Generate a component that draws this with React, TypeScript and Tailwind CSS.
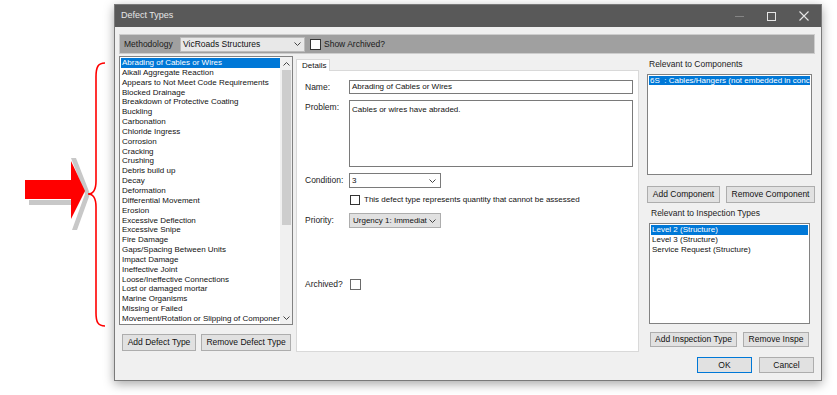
import React from "react";

const defects = [
  "Abrading of Cables or Wires",
  "Alkali Aggregate Reaction",
  "Appears to Not Meet Code Requirements",
  "Blocked Drainage",
  "Breakdown of Protective Coating",
  "Buckling",
  "Carbonation",
  "Chloride Ingress",
  "Corrosion",
  "Cracking",
  "Crushing",
  "Debris build up",
  "Decay",
  "Deformation",
  "Differential Movement",
  "Erosion",
  "Excessive Deflection",
  "Excessive Snipe",
  "Fire Damage",
  "Gaps/Spacing Between Units",
  "Impact Damage",
  "Ineffective Joint",
  "Loose/Ineffective Connections",
  "Lost or damaged mortar",
  "Marine Organisms",
  "Missing or Failed",
  "Movement/Rotation or Slipping of Componer",
];

const inspectionTypes = ["Level 2 (Structure)", "Level 3 (Structure)", "Service Request (Structure)"];

function Chevron({ up = false }: { up?: boolean }) {
  return (
    <svg width="7" height="4" viewBox="0 0 7 4" className="shrink-0">
      <path d={up ? "M0.5 3.5 L3.5 0.5 L6.5 3.5" : "M0.5 0.5 L3.5 3.5 L6.5 0.5"} fill="none" stroke="#444" strokeWidth="1" />
    </svg>
  );
}

function Btn({ label, w, h = "h-[17px]", primary = false }: { label: string; w: string; h?: string; primary?: boolean }) {
  return (
    <div
      className={`${w} ${h} flex items-center justify-center bg-[#e1e1e1] border ${
        primary ? "border-[#0078d7]" : "border-[#adadad]"
      } text-[8.5px] text-[#111] whitespace-nowrap overflow-hidden`}
    >
      {label}
    </div>
  );
}

function Annotation() {
  return (
    <svg width="114" height="395" viewBox="0 0 114 395" className="shrink-0">
      {/* shadow */}
      <rect x="29" y="200" width="42" height="5" fill="#c8c8c8" />
      <polygon points="71,158 76,158 90,194 77,230 72,230 85,194" fill="#c8c8c8" />
      {/* arrow */}
      <rect x="25" y="180" width="48" height="19" fill="#ff0000" />
      <polygon points="71,161 85,191 71,219" fill="#ff0000" />
      {/* brace */}
      <path
        d="M105 63 C98 63 96 67 96 77 L96 181 C96 190 93 194 88 194 C93 194 96 198 96 207 L96 313 C96 322 98 326 105 326"
        fill="none"
        stroke="#ff0000"
        strokeWidth="1.6"
      />
    </svg>
  );
}

export default function App() {
  return (
    <div
      className="w-[837px] h-[395px] bg-white flex overflow-hidden text-[8px] text-[#111]"
      style={{ fontFamily: '"Liberation Sans", Arial, sans-serif' }}
    >
      <Annotation />

      <div className="mt-[4px] w-[708px] h-[377px] flex flex-col border border-[#7a7a7a] bg-[#f0f0f0] shadow-[0_3px_10px_rgba(0,0,0,0.35)]">
        {/* title bar */}
        <div className="h-[22px] bg-[#595959] flex items-center pl-[6px]">
          <span className="text-[9px] text-[#e6e6e6] flex-1">Defect Types</span>
          <div className="flex items-center h-full">
            <div className="w-[32px] flex justify-center">
              <div className="w-[9px] h-px bg-[#858585]" />
            </div>
            <div className="w-[32px] flex justify-center">
              <div className="w-[9px] h-[9px] border border-[#e6e6e6]" />
            </div>
            <div className="w-[34px] flex justify-center">
              <svg width="10" height="10" viewBox="0 0 10 10">
                <path d="M0.5 0.5 L9.5 9.5 M9.5 0.5 L0.5 9.5" stroke="#e6e6e6" strokeWidth="1.1" />
              </svg>
            </div>
          </div>
        </div>

        {/* methodology bar */}
        <div className="mt-[7px] ml-[4px] mr-[6px] h-[20px] bg-[#a0a0a0] border border-[#cdcdcd] flex items-center pl-[4px]">
          <span className="text-[8.5px] text-[#1a1a1a] w-[56px]">Methodology</span>
          <div className="w-[125px] h-[15px] bg-[#e8e8e8] border border-[#bcbcbc] flex items-center pl-[2px] pr-[3px]">
            <span className="flex-1 text-[8.5px]">VicRoads Structures</span>
            <Chevron />
          </div>
          <div className="ml-[5px] w-[11px] h-[11px] bg-white border border-[#333]" />
          <span className="ml-[3px] text-[8.5px] text-[#1a1a1a]">Show Archived?</span>
        </div>

        {/* main area */}
        <div className="mt-[2px] ml-[4px] flex">
          {/* left column */}
          <div className="w-[174px] flex flex-col">
            <div className="h-[269px] border border-[#828282] bg-white flex">
              <ul className="flex-1 min-w-0 pt-[1px] pl-[1px] overflow-hidden">
                {defects.map((d, i) => (
                  <li
                    key={d}
                    className={`h-[9.85px] leading-[9.85px] pl-[1px] whitespace-nowrap overflow-hidden ${
                      i === 0 ? "bg-[#0078d7] text-white" : ""
                    }`}
                  >
                    {d}
                  </li>
                ))}
              </ul>
              <div className="w-[12px] bg-[#f0f0f0] flex flex-col items-center">
                <div className="h-[13px] flex items-center justify-center">
                  <Chevron up />
                </div>
                <div className="w-[9px] h-[155px] bg-[#cdcdcd]" />
                <div className="flex-1" />
                <div className="h-[12px] flex items-center justify-center">
                  <Chevron />
                </div>
              </div>
            </div>
            <div className="mt-[9px] ml-[3px] flex gap-[5px]">
              <Btn label="Add Defect Type" w="w-[74px]" />
              <Btn label="Remove Defect Type" w="w-[90px]" />
            </div>
          </div>

          {/* middle column */}
          <div className="ml-[3px] w-[343px] flex flex-col">
            <div className="mt-[3px] w-[34px] h-[12px] bg-white border border-b-0 border-[#d9d9d9] flex items-center pl-[5px] text-[8px] relative z-10">
              Details
            </div>
            <div className="-mt-px h-[282px] bg-white border border-[#d9d9d9] pl-[8px] pt-[9px] flex flex-col">
              <div className="flex items-center">
                <span className="w-[44px] text-[8.5px] text-[#222]">Name:</span>
                <div className="w-[284px] h-[14px] border border-[#7a7a7a] flex items-center pl-[2px]">
                  Abrading of Cables or Wires
                </div>
              </div>
              <div className="mt-[6px] flex">
                <span className="w-[44px] text-[8.5px] text-[#222] pt-[1px]">Problem:</span>
                <div className="w-[284px] h-[67px] border border-[#7a7a7a] pl-[2px] pt-[3px]">
                  Cables or wires have abraded.
                </div>
              </div>
              <div className="mt-[6px] flex items-center">
                <span className="w-[44px] text-[8.5px] text-[#222]">Condition:</span>
                <div className="w-[92px] h-[15px] border border-[#7a7a7a] flex items-center pl-[2px] pr-[4px]">
                  <span className="flex-1">3</span>
                  <Chevron />
                </div>
              </div>
              <div className="mt-[6px] ml-[45px] flex items-center">
                <div className="w-[10px] h-[10px] border border-[#333]" />
                <span className="ml-[4px] text-[8px]">This defect type represents quantity that cannot be assessed</span>
              </div>
              <div className="mt-[7px] flex items-center">
                <span className="w-[44px] text-[8.5px] text-[#222]">Priority:</span>
                <div className="w-[92px] h-[15px] bg-[#e1e1e1] border border-[#adadad] flex items-center pl-[3px] pr-[4px]">
                  <span className="flex-1 overflow-hidden whitespace-nowrap">Urgency 1: Immediat</span>
                  <Chevron />
                </div>
              </div>
              <div className="mt-[50px] flex items-center">
                <span className="w-[45px] text-[8.5px] text-[#222]">Archived?</span>
                <div className="w-[11px] h-[11px] border border-[#6a6a6a]" />
              </div>
            </div>
          </div>

          {/* right column */}
          <div className="ml-[8px] w-[168px] flex flex-col">
            <span className="mt-[3px] pl-[2px] leading-[10px] text-[8.5px] text-[#222]">Relevant to Components</span>
            <div className="mt-[5px] w-[165px] h-[101px] border border-[#828282] bg-white p-[1px]">
              <div className="h-[9px] leading-[9px] bg-[#0078d7] text-white whitespace-nowrap overflow-hidden pl-[1px]">
                6S&nbsp;&nbsp;: Cables/Hangers (not embedded in conc
              </div>
            </div>
            <div className="mt-[11px] flex gap-[6px]">
              <Btn label="Add Component" w="w-[73px]" />
              <Btn label="Remove Component" w="w-[89px]" />
            </div>
            <span className="mt-[5px] pl-[4px] leading-[10px] text-[8.5px] text-[#222]">Relevant to Inspection Types</span>
            <div className="mt-[5px] ml-[2px] w-[161px] h-[101px] border border-[#828282] bg-white p-[1px]">
              {inspectionTypes.map((t, i) => (
                <div
                  key={t}
                  className={`h-[9.8px] leading-[9.8px] pl-[1px] whitespace-nowrap ${
                    i === 0 ? "bg-[#0078d7] text-white" : ""
                  }`}
                >
                  {t}
                </div>
              ))}
            </div>
            <div className="mt-[8px] ml-[3px] flex gap-[6px]">
              <Btn label="Add Inspection Type" w="w-[87px]" h="h-[15px]" />
              <Btn label="Remove Inspe" w="w-[66px]" h="h-[15px]" />
            </div>
            <div className="mt-[10px] ml-[50px] flex gap-[7px]">
              <Btn label="OK" w="w-[55px]" h="h-[16px]" primary />
              <Btn label="Cancel" w="w-[55px]" h="h-[16px]" />
            </div>
          </div>
        </div>
      </div>
    </div>
  );
}
